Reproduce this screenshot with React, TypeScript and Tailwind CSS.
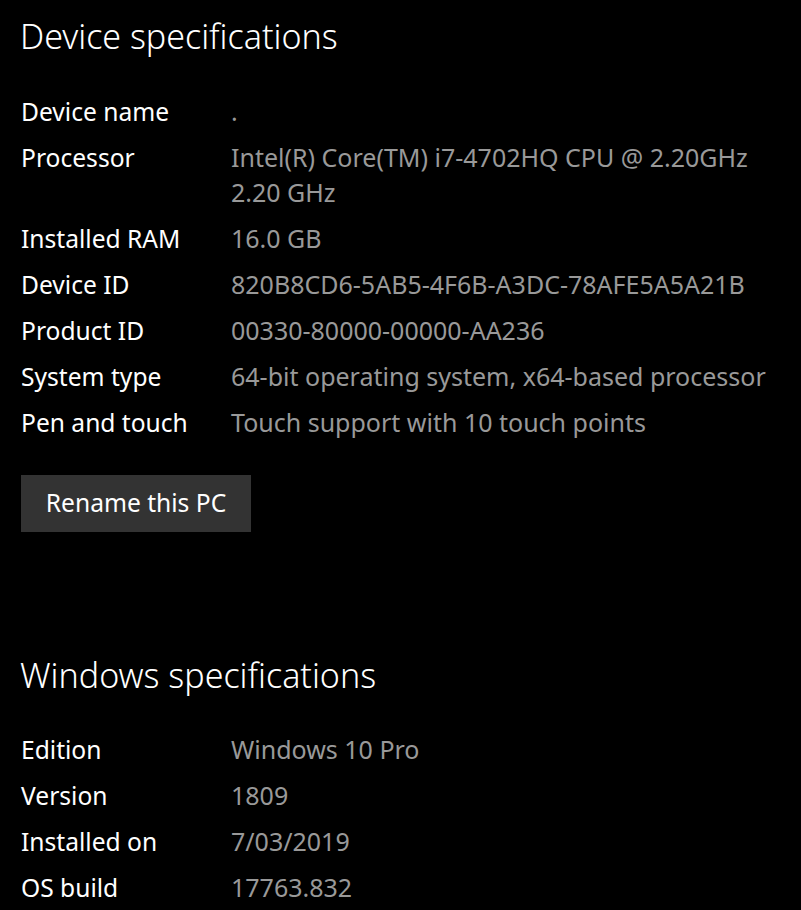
import React from 'react';

type Spec = { label: string; value: string[] };

const deviceSpecs: Spec[] = [
  { label: 'Device name', value: ['.'] },
  { label: 'Processor', value: ['Intel(R) Core(TM) i7-4702HQ CPU @ 2.20GHz', '2.20 GHz'] },
  { label: 'Installed RAM', value: ['16.0 GB'] },
  { label: 'Device ID', value: ['820B8CD6-5AB5-4F6B-A3DC-78AFE5A5A21B'] },
  { label: 'Product ID', value: ['00330-80000-00000-AA236'] },
  { label: 'System type', value: ['64-bit operating system, x64-based processor'] },
  { label: 'Pen and touch', value: ['Touch support with 10 touch points'] },
];

const windowsSpecs: Spec[] = [
  { label: 'Edition', value: ['Windows 10 Pro'] },
  { label: 'Version', value: ['1809'] },
  { label: 'Installed on', value: ['7/03/2019'] },
  { label: 'OS build', value: ['17763.832'] },
];

const SpecList: React.FC<{ specs: Spec[] }> = ({ specs }) => (
  <div className="flex flex-col gap-[11px]">
    {specs.map((s) => (
      <div key={s.label} className="flex leading-[35px]">
        <div className="w-[211px] shrink-0 pl-px text-white">{s.label}</div>
        <div className="text-[25px] text-[#999999]">
          {s.value.map((line) => (
            <div key={line}>{line}</div>
          ))}
        </div>
      </div>
    ))}
  </div>
);

export default function App() {
  return (
    <div
      className="min-h-[910px] w-full overflow-hidden bg-black px-5 pt-[15px] text-[24.6px] text-white"
      style={{ fontFamily: '"Noto Sans", "Open Sans", sans-serif' }}
    >
      <h1 className="text-[34px] font-light leading-[42px]">Device specifications</h1>
      <div className="mt-[37px]">
        <SpecList specs={deviceSpecs} />
      </div>
      <button className="mt-[35px] ml-px h-[57px] w-[230px] bg-[#333333] text-white">
        Rename this PC
      </button>
      <h2 className="mt-[122px] text-[34px] font-light leading-[42px]">Windows specifications</h2>
      <div className="mt-[36px]">
        <SpecList specs={windowsSpecs} />
      </div>
    </div>
  );
}
